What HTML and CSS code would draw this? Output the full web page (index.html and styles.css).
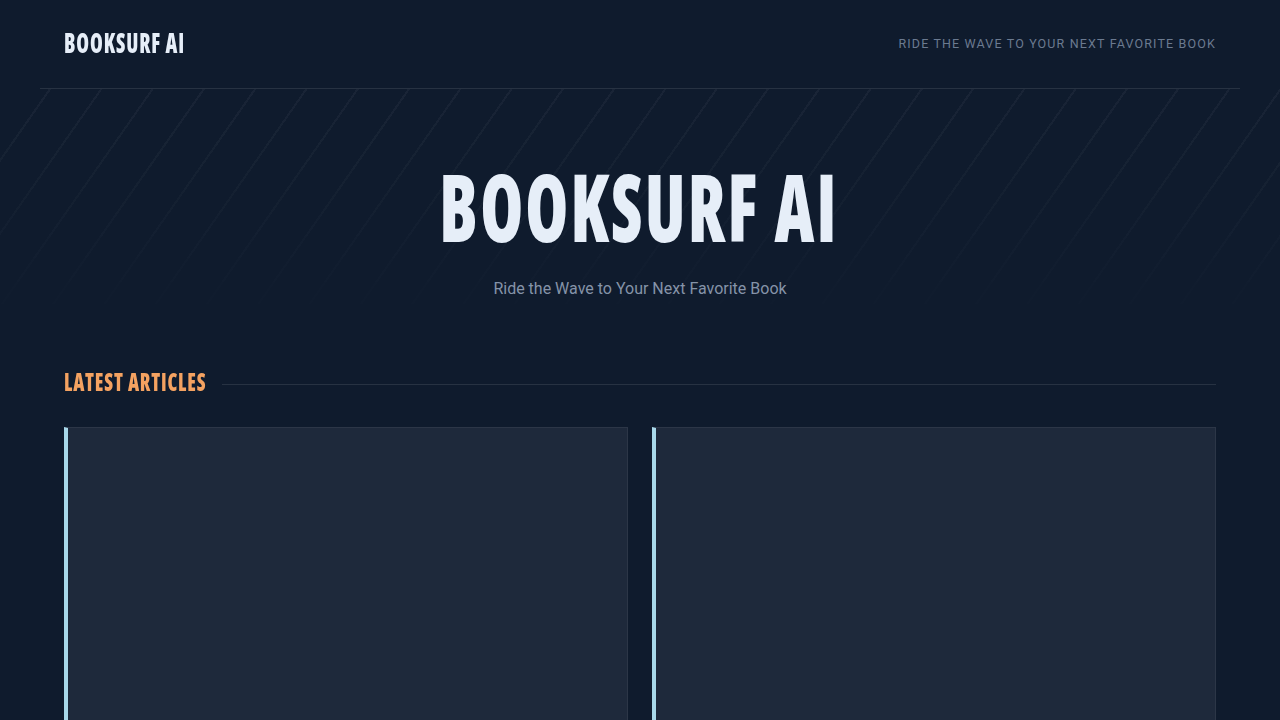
FILE: index.html
```html
<!DOCTYPE html>
<html lang="en">
<head>
<meta charset="utf-8">
<title>BookSurf AI</title>
<link rel="stylesheet" href="styles.css">
</head>
<body>
<header class="site-header">
  <a class="logo" href="#"><span class="squeeze">BOOKSURF AI</span></a>
  <p class="tagline">Ride the Wave to Your Next Favorite Book</p>
</header>
<section class="hero">
  <h1 class="hero-title"><span class="squeeze">BOOKSURF AI</span></h1>
  <p class="hero-sub">Ride the Wave to Your Next Favorite Book</p>
</section>
<main class="content">
  <div class="section-head">
    <h2 class="section-title"><span class="squeeze">Latest Articles</span></h2>
    <span class="section-rule"></span>
  </div>
  <div class="cards">
    <article class="card"></article>
    <article class="card"></article>
  </div>
</main>
</body>
</html>
```
FILE: styles.css
```css
* { box-sizing: border-box; }
html, body { margin: 0; padding: 0; }
body {
  background: #0f1b2d;
  color: #e6eef8;
  font-family: Roboto, "Liberation Sans", sans-serif;
  overflow: hidden;
}
.squeeze {
  display: inline-block;
  white-space: nowrap;
}
.site-header {
  margin: 0 40px;
  padding: 0 24px;
  height: 89px;
  display: flex;
  align-items: center;
  justify-content: space-between;
  border-bottom: 1px solid rgba(255,255,255,0.1);
}
.logo {
  display: block;
  width: 120px;
  margin-top: -2px;
  font-family: "Open Sans", sans-serif;
  font-stretch: 75%;
  font-weight: 800;
  font-size: 28px;
  line-height: 1.2;
  color: #e6eef8;
  text-decoration: none;
  letter-spacing: 1.2px;
}
.logo .squeeze {
  transform: scaleX(0.735);
  transform-origin: left center;
}
.tagline {
  margin: 0;
  margin-top: -2px;
  font-size: 12.5px;
  letter-spacing: 1.15px;
  text-transform: uppercase;
  color: #6b7a90;
}
.hero {
  position: relative;
  padding: 70px 24px 40px;
  text-align: center;
}
.hero::before {
  content: "";
  position: absolute;
  inset: 0;
  background: repeating-linear-gradient(125deg, transparent 0, transparent 40px, rgba(255,255,255,0.045) 40px, rgba(255,255,255,0.045) 42px);
  -webkit-mask-image: linear-gradient(to bottom, #000, transparent);
  mask-image: linear-gradient(to bottom, #000, transparent);
  pointer-events: none;
}
.hero-title {
  position: relative;
  margin: 0;
  padding-right: 2px;
  font-family: "Open Sans", sans-serif;
  font-stretch: 75%;
  font-weight: 800;
  font-size: 94px;
  line-height: 1;
  letter-spacing: 3px;
  color: #e6eef8;
}
.hero-title .squeeze {
  transform: scaleX(0.737);
  transform-origin: center;
}
.hero-sub {
  position: relative;
  margin: 26px 0 0;
  font-size: 16px;
  color: #8593a8;
}
.content {
  max-width: 1152px;
  margin: 0 auto;
}
.section-head {
  display: flex;
  align-items: center;
  gap: 17px;
  margin-top: 30px;
}
.section-title {
  width: 141px;
  flex: none;
  margin: 0;
  font-family: "Open Sans", sans-serif;
  font-stretch: 75%;
  font-weight: 800;
  font-size: 24px;
  line-height: 1.2;
  letter-spacing: 1px;
  text-transform: uppercase;
  color: #f4a261;
}
.section-title .squeeze {
  transform: scaleX(0.81);
  transform-origin: left center;
}
.section-rule {
  flex: 1;
  height: 1px;
  margin-top: 4px;
  background: rgba(255,255,255,0.1);
}
.cards {
  display: grid;
  grid-template-columns: 1fr 1fr;
  gap: 24px;
  margin-top: 30px;
}
.card {
  min-height: 400px;
  background: #1e293b;
  border: 1px solid rgba(255,255,255,0.06);
  border-left: 4px solid #a8d8ea;
}
```
